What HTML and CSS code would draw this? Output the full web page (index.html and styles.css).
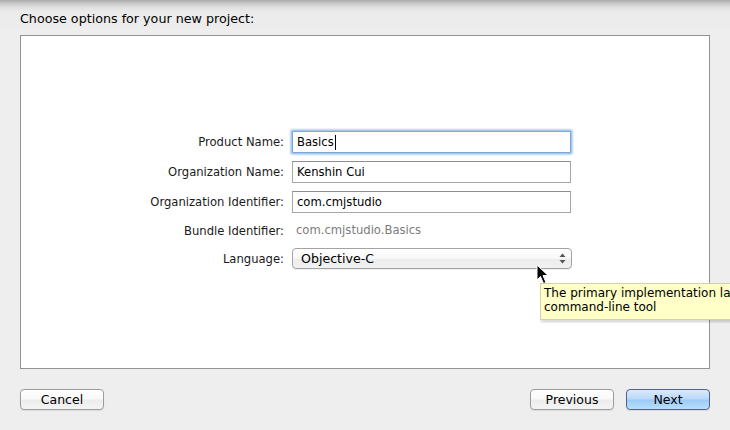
FILE: index.html
```html
<!DOCTYPE html>
<html>
<head>
<meta charset="utf-8">
<link rel="stylesheet" href="styles.css">
</head>
<body>
<div class="sheet">
  <div class="title">Choose options for your new project:</div>
  <div class="panel">
    <div class="form">
      <label class="lbl">Product Name:</label>
      <div class="field focus">Basics<span class="caret"></span></div>
      <label class="lbl">Organization Name:</label>
      <div class="field">Kenshin Cui</div>
      <label class="lbl">Organization Identifier:</label>
      <div class="field">com.cmjstudio</div>
      <label class="lbl">Bundle Identifier:</label>
      <div class="static">com.cmjstudio.Basics</div>
      <label class="lbl">Language:</label>
      <div class="popup">Objective-C
        <svg class="updown" width="7" height="11" viewBox="0 0 7 11"><path d="M3.5 0.5 L6.5 4 L0.5 4 Z" fill="#555"/><path d="M0.5 7 L6.5 7 L3.5 10.5 Z" fill="#555"/></svg>
      </div>
    </div>
  </div>
  <div class="footer">
    <button class="btn">Cancel</button>
    <div class="right">
      <button class="btn">Previous</button>
      <button class="btn default">Next</button>
    </div>
  </div>
</div>
<svg class="cursor" width="14" height="22" viewBox="0 0 14 22"><path d="M1 1 L1 16 L4.5 12.5 L7.5 19.5 L10 18.5 L7 11.5 L12 11.5 Z" fill="#000" stroke="#fff" stroke-width="1"/></svg>
<div class="tooltip-clip"><div class="tooltip">The primary implementation language<br>command-line tool</div></div>
</body>
</html>
```
FILE: styles.css
```css
html, body {
  margin: 0;
  padding: 0;
  width: 730px;
  height: 430px;
  overflow: hidden;
  background: #ececec;
  font-family: "DejaVu Sans", "Lucida Grande", sans-serif;
  color: #000;
}
.sheet {
  position: relative;
  width: 730px;
  height: 430px;
  background: linear-gradient(to bottom, #a9a9a9 0px, #c6c6c6 3px, #dedede 7px, #eaeaea 11px, #ececec 14px, #ececec 27px, #eeeeee 28px);
}
.title {
  padding: 11px 0 0 20px;
  height: 24px;
  font-size: 12.7px;
  line-height: 16px;
}
.panel {
  margin-left: 20px;
  width: 688px;
  height: 332px;
  background: #fff;
  border: 1px solid #939393;
}
.form {
  display: grid;
  grid-template-columns: 263px 280px;
  column-gap: 8px;
  row-gap: 8px;
  padding-top: 95px;
  align-items: center;
}
.lbl {
  text-align: right;
  font-size: 11.6px;
  color: #1a1a1a;
}
.field {
  height: 20px;
  border: 1px solid #a7a7a7;
  border-top-color: #8e8e8e;
  box-sizing: content-box;
  font-size: 11.6px;
  line-height: 20px;
  padding-left: 4px;
  width: 273px;
  background: #fff;
  display: flex;
  align-items: center;
}
.field.focus {
  border-color: #7aa7d9;
  box-shadow: 0 0 0 1px #a9c8ec, 0 0 2px 2px #b8d3f0;
  border-radius: 1px;
}
.caret {
  display: inline-block;
  width: 1px;
  height: 15px;
  background: #000;
  margin-left: 1px;
}
.static {
  height: 19px;
  line-height: 19px;
  font-size: 11.6px;
  color: #7c7c7c;
  padding-left: 4px;
}
.popup {
  height: 19px;
  width: 270px;
  border: 1px solid #a3a3a3;
  border-radius: 4px;
  background: linear-gradient(to bottom, #ffffff 0%, #f7f7f7 50%, #ececec 51%, #f2f2f2 100%);
  font-size: 12.6px;
  line-height: 19px;
  padding-left: 8px;
  position: relative;
  box-shadow: 0 1px 0 rgba(0,0,0,0.06);
}
.updown {
  position: absolute;
  right: 5px;
  top: 4px;
}
.footer {
  display: flex;
  justify-content: space-between;
  padding: 20px 20px 0 20px;
}
.right {
  display: flex;
  gap: 12px;
}
.btn {
  width: 84px;
  height: 21px;
  border: 1px solid #9c9c9c;
  border-radius: 4px;
  background: linear-gradient(to bottom, #ffffff 0%, #f9f9f9 45%, #ededed 55%, #f4f4f4 100%);
  font-family: "DejaVu Sans", "Lucida Grande", sans-serif;
  font-size: 12.5px;
  color: #000;
  padding: 0;
  line-height: 19px;
  box-shadow: 0 1px 1px rgba(0,0,0,0.08);
}
.btn.default {
  border-color: #50638f;
  background: linear-gradient(to bottom, #dbeafc 0%, #bcd9f8 45%, #9ecbf6 55%, #b8e0fc 100%);
}
.cursor {
  position: absolute;
  left: 536px;
  top: 264px;
}
.tooltip-clip {
  position: absolute;
  left: 540px;
  top: 283px;
  width: 190px;
  height: 40px;
  overflow: hidden;
}
.tooltip {
  width: 260px;
  height: 31px;
  background: #ffffc7;
  border: 1px solid #d2d2a8;
  font-size: 12px;
  line-height: 14px;
  padding: 2px 3px;
  white-space: nowrap;
  box-shadow: 0 2px 5px rgba(0,0,0,0.2);
}
```
